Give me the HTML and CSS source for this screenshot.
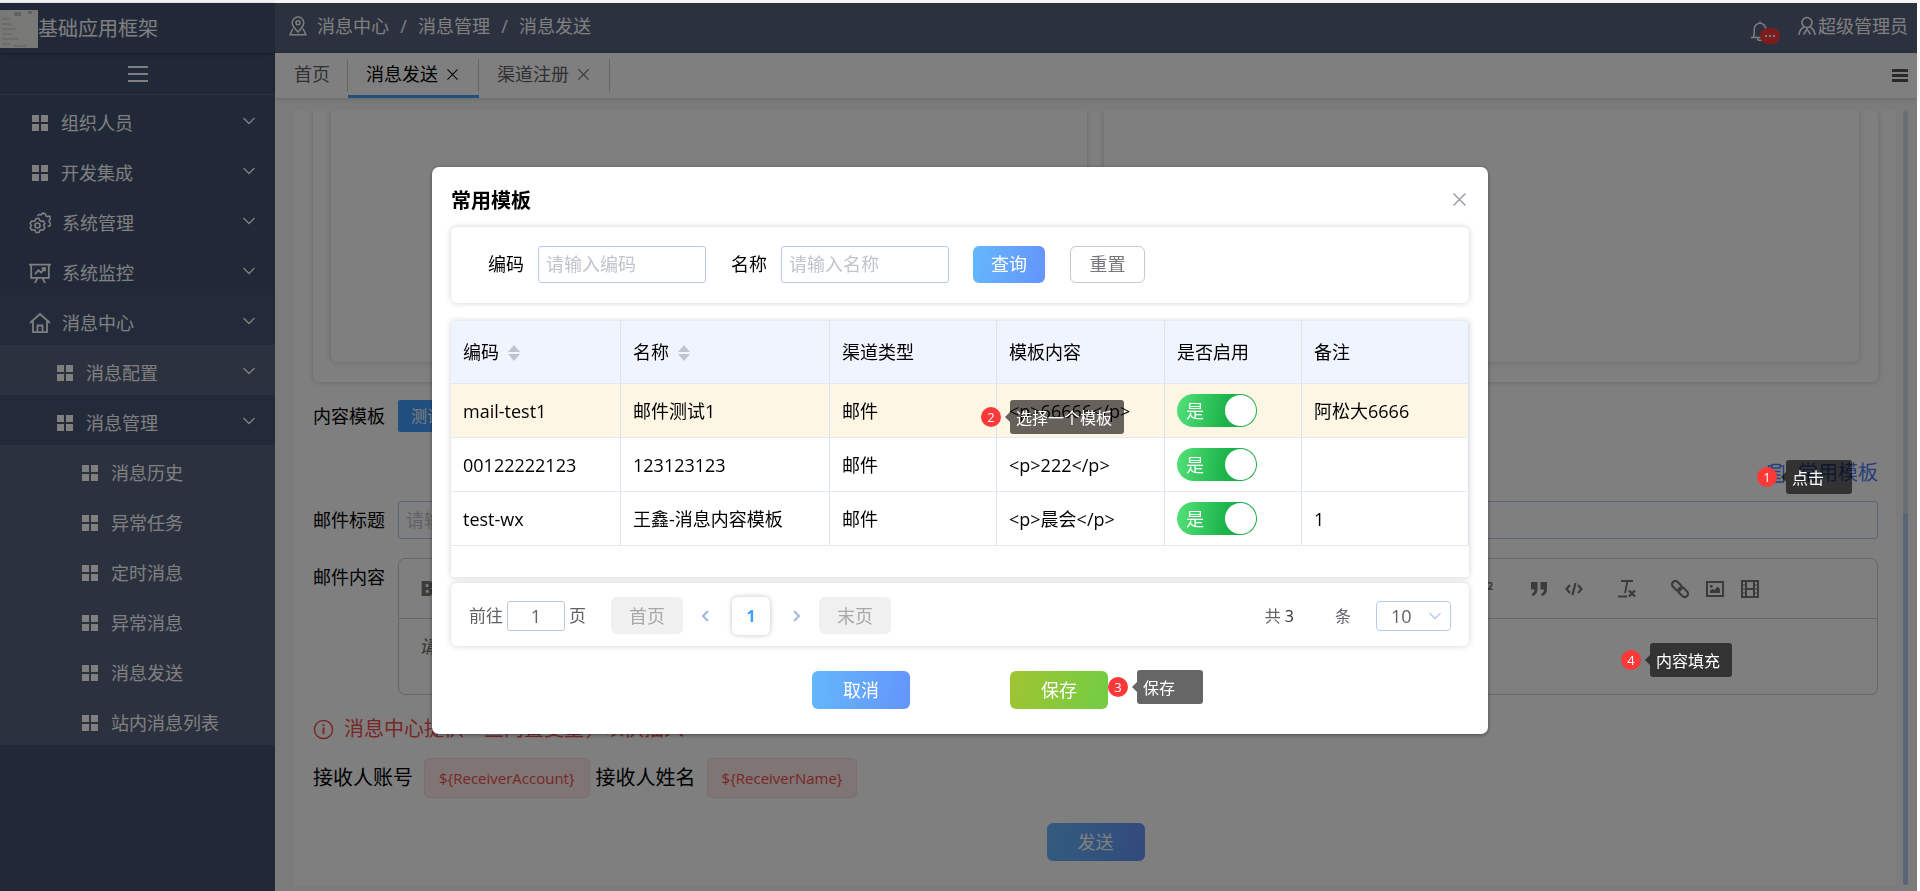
FILE: index.html
```html
<!DOCTYPE html>
<html lang="zh-CN">
<head>
<meta charset="utf-8">
<title>基础应用框架</title>
<link rel="stylesheet" href="styles.css">
</head>
<body>
<svg class="defs" aria-hidden="true">
  <symbol id="i-grid" viewBox="0 0 16 16"><path fill="currentColor" d="M0 0h7v7H0zM9 0h7v7H9zM0 9h7v7H0zM9 9h7v7H9z"/></symbol>
  <symbol id="i-down" viewBox="0 0 12 12"><path fill="none" stroke="currentColor" stroke-width="1.3" d="M.5 3l5.500 5.500L11.500 3"/></symbol>
  <symbol id="i-x" viewBox="0 0 12 12"><path fill="none" stroke="currentColor" stroke-width="1.100" d="M.5.5l11 11M11.500.5l-11 11"/></symbol>
  <symbol id="i-gear" viewBox="0 0 22 22"><g fill="none" stroke="currentColor" stroke-width="1.600" stroke-linejoin="round"><circle cx="8.500" cy="13.500" r="2.500"/><path d="M7 6.500h3l.8 2 1.400.8 2.200-.3 1.500 2.600-1.400 1.900 1.400 1.900-1.500 2.600-2.200-.3-1.400.8-.8 2H7l-.8-2-1.400-.8-2.200.3-1.500-2.600 1.400-1.900-1.400-1.900 1.500-2.600 2.200.3 1.400-.8z"/><path d="M8.500 4l1.200-1.500 2.300.5 1.500-1.900 2.800.6.5 2 1.600.9 2.100-.5 1.200 2.600-1.500 1.600.2 1.900 1.500 1.500-1.200 2.400-2 .1"/></g></symbol>
  <symbol id="i-monitor" viewBox="0 0 20 20"><g fill="none" stroke="currentColor" stroke-width="1.600"><path d="M0 2.300h20M2 2.300v12.200h16V2.300M7.500 15L5.500 19M12.500 15l2 4M5.500 11l3-3.500 2.500 2 3.500-4M11.500 5.500h3v3"/></g></symbol>
  <symbol id="i-home" viewBox="0 0 22 22"><g fill="none" stroke="currentColor" stroke-width="1.800"><path d="M1 11L11 2l10 9M4 9v11.200h14V9M8.500 20v-6.500h5V20"/></g></symbol>
  <symbol id="i-pin" viewBox="0 0 18 20"><g fill="none" stroke="currentColor" stroke-width="1.500"><path d="M9 16C5.500 12.500 3.200 10 3.200 6.800a5.800 5.800 0 0 1 11.600 0C14.800 10 12.500 12.500 9 16z"/><circle cx="9" cy="6.800" r="2"/><path d="M4 12.500L1 18.800h16l-3-6.300"/></g></symbol>
  <symbol id="i-bell" viewBox="0 0 20 22"><g fill="none" stroke="currentColor" stroke-width="1.500"><path d="M1 17.500h18M3.500 17C4.500 15 4.200 12 4.300 9a5.700 5.700 0 0 1 11.400 0c.1 3-.2 6 .8 8M10 3.300V1.500M7.500 18a2.500 2.500 0 0 0 5 0"/></g></symbol>
  <symbol id="i-user" viewBox="0 0 18 20"><g fill="none" stroke="currentColor" stroke-width="1.600"><circle cx="9" cy="6.500" r="5"/><path d="M1 19c.3-4 2-6.500 5-8M17 19c-.3-4-2-6.500-5-8M5.500 18.500L9 13l3.500 5.500"/></g></symbol>
  <symbol id="i-clip" viewBox="0 0 18 20"><g fill="none" stroke="currentColor" stroke-width="1.400"><path d="M5 3H1.500v16h15V3H13M5 1.500h8v3.500H5zM4.500 8.500h9M4.500 12h9M4.500 15.500h9"/></g></symbol>
  <symbol id="i-info" viewBox="0 0 22 22"><circle cx="11" cy="11" r="9.500" fill="none" stroke="currentColor" stroke-width="1.500"/><path fill="currentColor" d="M10 9h2v7h-2zM10 5.500h2v2h-2z"/></symbol>
  <symbol id="i-quote" viewBox="0 0 16 14"><path fill="currentColor" d="M0 0h6.500v7c0 4-2 6.500-5.500 7v-2.500c1.700-.6 2.500-2 2.500-4H0zM9.500 0H16v7c0 4-2 6.500-5.500 7v-2.500c1.700-.6 2.500-2 2.500-4H9.500z"/></symbol>
  <symbol id="i-code" viewBox="0 0 18 14"><path fill="none" stroke="currentColor" stroke-width="2.200" d="M5 3L1.500 7 5 11M13 3l3.500 4L13 11M10.500 1l-3 12"/></symbol>
  <symbol id="i-clean" viewBox="0 0 18 18"><path fill="none" stroke="currentColor" stroke-width="1.800" d="M3 1h12M9.500 1L7 13M0 16.500h9"/><path fill="none" stroke="currentColor" stroke-width="2.400" d="M11 10.500l6 6M17 10.500l-6 6"/></symbol>
  <symbol id="i-link" viewBox="0 0 18 18"><g fill="none" stroke="currentColor" stroke-width="2.200" transform="rotate(45 9 9)"><rect x="-1" y="5.700" width="11" height="6.600" rx="3.300"/><rect x="8" y="5.700" width="11" height="6.600" rx="3.300"/></g></symbol>
  <symbol id="i-image" viewBox="0 0 18 16"><path fill="none" stroke="currentColor" stroke-width="2" d="M1 1h16v14H1z"/><path fill="currentColor" d="M4 12V9.500L6.500 8l2 1 3-3.500L14 8v4zM4 4h2.500v2.500H4z"/></symbol>
  <symbol id="i-video" viewBox="0 0 18 18"><path fill="none" stroke="currentColor" stroke-width="2" d="M1 1h16v16H1zM5 1v16M13 1v16M5 9h8"/><path stroke="currentColor" stroke-width="1.200" d="M1 5h4M1 9h4M1 13h4M13 5h4M13 9h4M13 13h4"/></symbol>
</svg>

<div class="app">
  <aside class="sidebar">
    <div class="brand">
      <svg class="brand-logo" viewBox="0 0 38 38" aria-hidden="true"><path fill="#f1f1ee" d="M0 0h38v38H0z"/><path fill="#c4c4c2" d="M14 2h7v4h-7zM28 1h4v3h-4z"/><path stroke="#cfcfcc" stroke-width="1.500" d="M2 9h8M2 14h10M2 19h14M2 24h10M2 29h16M2 34h8M14 36h12"/></svg>
      <span>基础应用框架</span>
    </div>
    <button class="collapse" type="button" aria-label="收起菜单"><i></i><i></i><i></i></button>
    <nav class="menu">
      <a class="item" href="#"><svg class="ico"><use href="#i-grid"/></svg><span>组织人员</span><svg class="arrow"><use href="#i-down"/></svg></a>
      <a class="item" href="#"><svg class="ico"><use href="#i-grid"/></svg><span>开发集成</span><svg class="arrow"><use href="#i-down"/></svg></a>
      <a class="item" href="#"><svg class="ico big"><use href="#i-gear"/></svg><span>系统管理</span><svg class="arrow"><use href="#i-down"/></svg></a>
      <a class="item" href="#"><svg class="ico big"><use href="#i-monitor"/></svg><span>系统监控</span><svg class="arrow"><use href="#i-down"/></svg></a>
      <a class="item open" href="#"><svg class="ico big"><use href="#i-home"/></svg><span>消息中心</span><svg class="arrow"><use href="#i-down"/></svg></a>
      <a class="item sub" href="#"><svg class="ico"><use href="#i-grid"/></svg><span>消息配置</span><svg class="arrow"><use href="#i-down"/></svg></a>
      <a class="item sub open" href="#"><svg class="ico"><use href="#i-grid"/></svg><span>消息管理</span><svg class="arrow"><use href="#i-down"/></svg></a>
      <a class="item leaf" href="#"><svg class="ico"><use href="#i-grid"/></svg><span>消息历史</span></a>
      <a class="item leaf" href="#"><svg class="ico"><use href="#i-grid"/></svg><span>异常任务</span></a>
      <a class="item leaf" href="#"><svg class="ico"><use href="#i-grid"/></svg><span>定时消息</span></a>
      <a class="item leaf" href="#"><svg class="ico"><use href="#i-grid"/></svg><span>异常消息</span></a>
      <a class="item leaf" href="#"><svg class="ico"><use href="#i-grid"/></svg><span>消息发送</span></a>
      <a class="item leaf" href="#"><svg class="ico"><use href="#i-grid"/></svg><span>站内消息列表</span></a>
    </nav>
  </aside>

  <div class="main">
    <header class="topbar">
      <div class="crumbs"><svg class="pin-ico"><use href="#i-pin"/></svg><span>消息中心</span><b>/</b><span>消息管理</span><b>/</b><span>消息发送</span></div>
      <div class="account">
        <button class="bell" type="button" aria-label="通知"><svg><use href="#i-bell"/></svg><span class="bell-badge"><i></i><i></i><i></i></span></button>
        <svg class="user-ico"><use href="#i-user"/></svg><span>超级管理员</span>
      </div>
    </header>
    <div class="tabs">
      <a class="tab first" href="#">首页</a>
      <a class="tab active" href="#">消息发送<svg><use href="#i-x"/></svg></a>
      <a class="tab" href="#">渠道注册<svg><use href="#i-x"/></svg></a>
      <button class="tabs-menu" type="button" aria-label="标签菜单"><i></i><i></i><i></i></button>
    </div>
    <div class="content">
      <form class="panel">
        <div class="preview"><div></div><div></div></div>
        <div class="row template"><span class="label">内容模板</span><button class="chip" type="button">测试</button></div>
        <div class="link-row"><a class="common" href="#"><svg><use href="#i-clip"/></svg>常用模板</a></div>
        <div class="row"><label class="label" for="subject">邮件标题</label><input class="text grow tall" id="subject" placeholder="请输入邮件标题"></div>
        <div class="row editor-row">
          <label class="label" for="body">邮件内容</label>
          <div class="editor">
            <div class="toolbar">
              <button type="button" aria-label="粗体"><b>B</b></button>
              <div class="tools">
                <button type="button" aria-label="上标"><span>x<sup>2</sup></span></button>
                <button type="button" class="gap" aria-label="引用"><svg width="16" height="14"><use href="#i-quote"/></svg></button>
                <button type="button" aria-label="代码"><svg width="18" height="14"><use href="#i-code"/></svg></button>
                <button type="button" class="gap" aria-label="清除格式"><svg width="18" height="18"><use href="#i-clean"/></svg></button>
                <button type="button" class="gap" aria-label="链接"><svg width="18" height="18"><use href="#i-link"/></svg></button>
                <button type="button" aria-label="图片"><svg width="18" height="16"><use href="#i-image"/></svg></button>
                <button type="button" aria-label="视频"><svg width="18" height="18"><use href="#i-video"/></svg></button>
              </div>
            </div>
            <textarea class="body" id="body" placeholder="请输入邮件内容"></textarea>
          </div>
        </div>
        <p class="notice"><svg><use href="#i-info"/></svg>消息中心提供一些内置变量，以供插入</p>
        <div class="vars"><span>接收人账号</span><code>${ReceiverAccount}</code><span>接收人姓名</span><code>${ReceiverName}</code></div>
        <button class="btn blue send" type="button">发送</button>
      </form>
      <div class="scrollbar"><div></div></div>
    </div>
  </div>
</div>

<div class="backdrop"></div>
<div class="dialog-wrap">
  <section class="dialog" role="dialog" aria-labelledby="dlg-title">
    <div class="dialog-head"><h2 id="dlg-title">常用模板</h2><button type="button" aria-label="关闭"><svg><use href="#i-x"/></svg></button></div>
    <form class="card search">
      <label for="code">编码</label><input class="text" id="code" placeholder="请输入编码">
      <label for="name">名称</label><input class="text" id="name" placeholder="请输入名称">
      <button class="btn blue small" type="button">查询</button>
      <button class="btn plain small" type="button">重置</button>
    </form>
    <div class="card table-card">
      <table>
        <colgroup><col class="c1"><col class="c2"><col class="c3"><col class="c4"><col class="c5"><col></colgroup>
        <thead><tr>
          <th>编码<svg class="sort" viewBox="0 0 12 16"><path d="M0 7l6-7 6 7zM0 9l6 7 6-7z"/></svg></th>
          <th>名称<svg class="sort" viewBox="0 0 12 16"><path d="M0 7l6-7 6 7zM0 9l6 7 6-7z"/></svg></th>
          <th>渠道类型</th><th>模板内容</th><th>是否启用</th><th>备注</th>
        </tr></thead>
        <tbody>
          <tr class="current"><td>mail-test1</td><td>邮件测试1</td><td>邮件</td><td>&lt;p&gt;66666&lt;/p&gt;</td><td><label class="switch"><input type="checkbox" checked><span>是</span></label></td><td>阿松大6666</td></tr>
          <tr><td>00122222123</td><td>123123123</td><td>邮件</td><td>&lt;p&gt;222&lt;/p&gt;</td><td><label class="switch"><input type="checkbox" checked><span>是</span></label></td><td></td></tr>
          <tr><td>test-wx</td><td>王鑫-消息内容模板</td><td>邮件</td><td>&lt;p&gt;晨会&lt;/p&gt;</td><td><label class="switch"><input type="checkbox" checked><span>是</span></label></td><td>1</td></tr>
        </tbody>
      </table>
    </div>
    <div class="card pager">
      <label class="jump">前往<input class="text" value="1">页</label>
      <button class="btn flat" type="button" disabled>首页</button>
      <button class="step" type="button" aria-label="上一页"><svg viewBox="0 0 8 12"><path d="M7 1L2 6l5 5"/></svg></button>
      <button class="page" type="button">1</button>
      <button class="step" type="button" aria-label="下一页"><svg viewBox="0 0 8 12"><path d="M1 1l5 5-5 5"/></svg></button>
      <button class="btn flat" type="button" disabled>末页</button>
      <span class="total">共 <b>3</b></span><span class="unit">条</span>
      <span class="size"><select aria-label="每页条数"><option>10</option></select><svg><use href="#i-down"/></svg></span>
    </div>
    <div class="dialog-foot">
      <button class="btn blue" type="button">取消</button>
      <button class="btn green" type="button">保存</button>
    </div>
  </section>
</div>

<div class="note n1"><i>1</i><span>点击</span></div>
<div class="note n2"><i>2</i><span>选择一个模板</span></div>
<div class="note n3"><i>3</i><span>保存</span></div>
<div class="note n4"><i>4</i><span>内容填充</span></div>
</body>
</html>
```
FILE: styles.css
```css
* { box-sizing: border-box; }
body {
  margin: 0;
  background: #fff;
  font: 18px/26px "Open Sans", "Noto Sans CJK SC", sans-serif;
  color: #000;
  overflow: hidden;
}
button, input, select, textarea { font: inherit; margin: 0; }
button { border: 0; background: none; padding: 0; color: inherit; cursor: pointer; }
a { color: inherit; text-decoration: none; }
svg { display: block; flex: none; }
.defs { position: absolute; width: 0; height: 0; }

.app {
  display: flex;
  height: 100vh;
  border-top: 3px solid #f4f4f4;
  border-right: 3px solid #fff;
  isolation: isolate;
}

/* sidebar */
.sidebar { width: 275px; flex: none; background: #425272; color: #fff; }
.brand {
  display: flex;
  align-items: center;
  height: 50px;
  padding-top: 2px;
  font-size: 20px;
  box-shadow: 0 1px 4px rgba(0, 0, 0, .3);
}
.brand-logo { width: 38px; height: 38px; }
.collapse {
  display: flex;
  flex-direction: column;
  align-items: center;
  justify-content: center;
  gap: 5px;
  width: 100%;
  height: 42px;
  border-bottom: 1px solid #56658a;
}
.collapse i { width: 20px; height: 2px; background: #fff; }
.item { display: flex; align-items: center; height: 50px; padding: 5px 20px 0 31px; }
.ico { width: 16px; height: 16px; margin: 0 13px 0 1px; }
.ico.big { width: 22px; height: 22px; margin: 0 11px 0 -2px; }
.arrow { width: 12px; height: 12px; margin: 0 0 3px auto; }
.sub { padding-left: 56px; background: #56627e; }
.leaf { padding-left: 81px; background: #56627e; }
.open { background: #465776; }

/* top */
.main { flex: 1; min-width: 0; display: flex; flex-direction: column; background: #f6f6f6; }
.topbar {
  display: flex;
  justify-content: space-between;
  align-items: center;
  height: 50px;
  flex: none;
  padding: 0 9px 4px 14px;
  background: #56627e;
  color: #fff;
}
.crumbs, .account { display: flex; align-items: center; }
.crumbs b { width: 29px; text-align: center; font-weight: 400; }
.pin-ico { width: 18px; height: 20px; margin-right: 10px; }
.user-ico { width: 18px; height: 20px; margin: 0 2px 0 18px; }
.bell { position: relative; }
.bell svg { width: 20px; height: 22px; margin: 9px 10px 0 0; }
.bell-badge {
  position: absolute;
  right: 0;
  top: 17px;
  display: flex;
  align-items: center;
  justify-content: center;
  gap: 2px;
  width: 20px;
  height: 16px;
  border-radius: 8px;
  background: #f83838;
}
.bell-badge i { width: 2px; height: 2px; background: #fff; }
.tabs {
  position: relative;
  display: flex;
  align-items: stretch;
  height: 45px;
  flex: none;
  background: #fff;
  box-shadow: 0 1px 5px rgba(0, 0, 0, .15);
  color: #606266;
}
.tab {
  position: relative;
  display: flex;
  align-items: center;
  gap: 9px;
  padding: 0 21px 3px 18px;
}
.tab::after {
  content: "";
  position: absolute;
  right: 0;
  top: 6px;
  height: 33px;
  border-right: 1px solid #ccc;
}
.tab svg { width: 11px; height: 11px; }
.tab.first { padding: 0 18px 3px 19px; }
.tab.active { color: #000; box-shadow: inset 0 -3px #409eff; }
.tabs-menu { display: flex; flex-direction: column; justify-content: center; gap: 2px; margin: 0 9px 0 auto; }
.tabs-menu i { width: 16px; height: 3px; background: #555; }

/* content */
.content { flex: 1; min-height: 0; display: flex; gap: 7px; padding: 13px 9px 6px 19px; }
.panel {
  flex: 1;
  display: flex;
  flex-direction: column;
  min-width: 0;
  padding: 0 18px 0 19px;
  background: #fff;
  overflow: hidden;
}
.preview {
  display: flex;
  gap: 17px;
  height: 271px;
  flex: none;
  padding: 0 19px 20px 18px;
  border-radius: 0 0 6px 6px;
  box-shadow: 0 0 6px rgba(0, 0, 0, .2);
}
.preview div { flex: 1; border-radius: 0 0 6px 6px; box-shadow: 0 0 6px rgba(0, 0, 0, .2); }
.row { display: flex; align-items: center; }
.label { width: 85px; flex: none; }
.template { margin-top: 18px; }
.chip { height: 32px; padding: 0 13px; border-radius: 2px; background: #409eff; color: #fff; font-size: 16px; }
.link-row { display: flex; justify-content: flex-end; margin: 26px 0 13px; }
.common { display: flex; align-items: center; gap: 13px; height: 30px; font-size: 20px; color: #4c7cf5; }
.common svg { width: 18px; height: 20px; }
.text {
  width: 168px;
  height: 37px;
  padding: 0 7px;
  border: 1px solid #b6c8f2;
  border-radius: 3px;
  background: #fff;
  color: #606266;
  outline: 0;
}
.text::placeholder { color: #c0c4cc; }
.text.tall { height: 38px; }
.grow { flex: 1; }
.editor-row { align-items: flex-start; margin-top: 19px; }
.editor-row .label { padding-top: 6px; }
.editor { flex: 1; border: 1px solid #ccc; border-radius: 7px; }
.toolbar {
  display: flex;
  align-items: center;
  justify-content: space-between;
  height: 60px;
  padding: 0 110px 0 21px;
  border-bottom: 1px solid #ccc;
  color: #777;
}
.toolbar button b { font-size: 21px; font-weight: 800; }
.tools { display: flex; align-items: center; }
.tools button { width: 35px; height: 24px; display: grid; place-items: center; }
.tools .gap { margin-left: 18px; }
.tools sup { font-size: 10px; line-height: 10px; font-weight: 700; }
.body {
  display: block;
  width: 100%;
  height: 75px;
  padding: 14px 20px;
  border: 0;
  background: none;
  resize: none;
  outline: 0;
}
.body::placeholder { color: #666; font-style: italic; }
.notice { display: flex; align-items: center; gap: 10px; height: 28px; margin: 20px 0 15px; font-size: 20px; color: #f04e4e; }
.notice svg { width: 21px; height: 21px; }
.vars { display: flex; align-items: center; font-size: 20px; height: 40px; }
.vars code {
  height: 40px;
  margin: 0 6px 0 11px;
  padding: 6px 14px;
  border: 1px solid #fbd8d8;
  border-radius: 5px;
  background: #feeaea;
  color: #f04e4e;
  font: 15px/26px "Open Sans", sans-serif;
}
.scrollbar { width: 5px; border-radius: 3px; background: #d6dde9; display: flex; align-items: flex-end; }
.scrollbar div { width: 5px; height: 48%; border-radius: 3px; background: #b4c6ee; }

/* buttons */
.btn { width: 98px; height: 38px; border-radius: 6px; color: #fff; }
.btn.small { width: 72px; height: 37px; }
.blue { background: linear-gradient(100deg, #64b8fb, #6494fb); }
.green { background: linear-gradient(100deg, #a0c432, #72cd44); }
.plain.small { width: 75px; border: 1px solid #c8c8c8; color: #76777a; background: #fff; }
.btn.flat { width: 72px; height: 37px; background: #f0f0f0; color: #a8a8a8; }
.send { align-self: center; margin-top: 25px; flex: none; }

/* dialog */
.backdrop { position: fixed; inset: 3px 3px 0 0; background: rgba(0, 0, 0, .5); }
.dialog-wrap {
  position: fixed;
  inset: 0;
  display: flex;
  justify-content: center;
  align-items: flex-start;
  padding-top: 167px;
}
.dialog {
  width: 55%;
  padding: 20px 19px 25px;
  border-radius: 7px;
  background: #fff;
  box-shadow: 0 1px 4px rgba(0, 0, 0, .4);
}
.dialog-head { display: flex; align-items: center; justify-content: space-between; height: 27px; margin-bottom: 13px; }
.dialog-head h2 { margin: 0; font-size: 20px; }
.dialog-head button { margin: 0 3px 3px 0; color: #909399; }
.dialog-head svg { width: 13px; height: 13px; }
.card { border-radius: 6px; background: #fff; box-shadow: 0 0 6px rgba(0, 0, 0, .18); }
.search { display: flex; align-items: center; height: 76px; padding: 0 0 2px 37px; }
.search .text { margin: 0 25px 0 14px; }
.search #name { margin-right: 24px; }
.search .plain { margin-left: 25px; }
.table-card { margin: 18px 0 6px; padding-bottom: 31px; border-radius: 3px; overflow: hidden; box-shadow: 0 0 6px rgba(0, 0, 0, .18); }
table { width: 100%; table-layout: fixed; border-spacing: 0; }
.c1 { width: 170px; }
.c2 { width: 209px; }
.c3 { width: 167px; }
.c4 { width: 168px; }
.c5 { width: 137px; }
th, td {
  padding: 0 0 0 12px;
  border-right: 1px solid #dbe4f2;
  border-bottom: 1px solid #e4eaf4;
  text-align: left;
  font-weight: 400;
  white-space: nowrap;
}
th { height: 63px; background: #f0f4ff; }
td { height: 54px; }
.current td { background: #fef6e4; }
.sort { display: inline-block; width: 12px; height: 16px; margin-left: 9px; vertical-align: -2px; fill: #c0c4cc; }
.switch {
  position: relative;
  display: block;
  width: 80px;
  height: 33px;
  border-radius: 17px;
  background: linear-gradient(100deg, #54e27a, #1cb44a 60%, #16a844);
  color: #fff;
}
.switch span { display: block; padding-left: 9px; line-height: 34px; }
.switch input {
  appearance: none;
  position: absolute;
  right: 1px;
  top: 1px;
  width: 31px;
  height: 31px;
  margin: 0;
  border-radius: 50%;
  background: #fff;
}
.pager { display: flex; align-items: center; height: 63px; padding: 2px 18px 0; color: #606266; }
.jump { display: flex; align-items: center; gap: 4px; font-size: 17px; }
.jump .text { width: 58px; height: 30px; padding: 0; text-align: center; font-size: 18px; }
.pager .flat { margin: 0 18px 0 25px; }
.pager .flat ~ .flat { margin-left: 18px; }
.step svg { width: 8px; height: 12px; fill: none; stroke: #a3b6de; stroke-width: 2; }
.page {
  width: 38px;
  height: 38px;
  margin: 0 23px;
  border-radius: 6px;
  box-shadow: 0 0 5px rgba(0, 0, 0, .25);
  color: #409eff;
  font-weight: 700;
  font-size: 16px;
}
.total { margin-left: auto; font-size: 16px; }
.total b { font-weight: 400; color: #303133; }
.unit { margin: 0 25px 0 41px; font-size: 16px; }
.size { position: relative; }
.size select {
  display: block;
  appearance: none;
  width: 75px;
  height: 30px;
  padding: 0 14px;
  border: 1px solid #b6c8f2;
  border-radius: 4px;
  background: #fff;
  color: #606266;
}
.size svg { position: absolute; right: 10px; top: 9px; width: 12px; height: 12px; color: #b6c8f2; }
.dialog-foot { display: flex; justify-content: center; gap: 100px; margin-top: 25px; }

/* step notes */
.note { position: absolute; display: flex; align-items: center; height: 34px; color: #fff; font-size: 16px; }
.note i {
  width: 20px;
  height: 20px;
  border-radius: 50%;
  background: #fc3838;
  font-size: 13px;
  font-style: normal;
  line-height: 20px;
  text-align: center;
}
.note span {
  position: relative;
  min-width: 66px;
  height: 34px;
  margin-left: 9px;
  padding: 0 12px 0 6px;
  border-radius: 3px;
  background: rgba(0, 0, 0, .6);
  line-height: 36px;
}
.note span::before {
  content: "";
  position: absolute;
  left: -5px;
  top: 12px;
  border: 5px solid transparent;
  border-left-width: 0;
  border-right-color: rgba(0, 0, 0, .6);
}
.n1 { left: 1757px; top: 460px; }
.n2 { left: 981px; top: 400px; }
.n3 { left: 1108px; top: 670px; }
.n4 { left: 1621px; top: 643px; }
```
